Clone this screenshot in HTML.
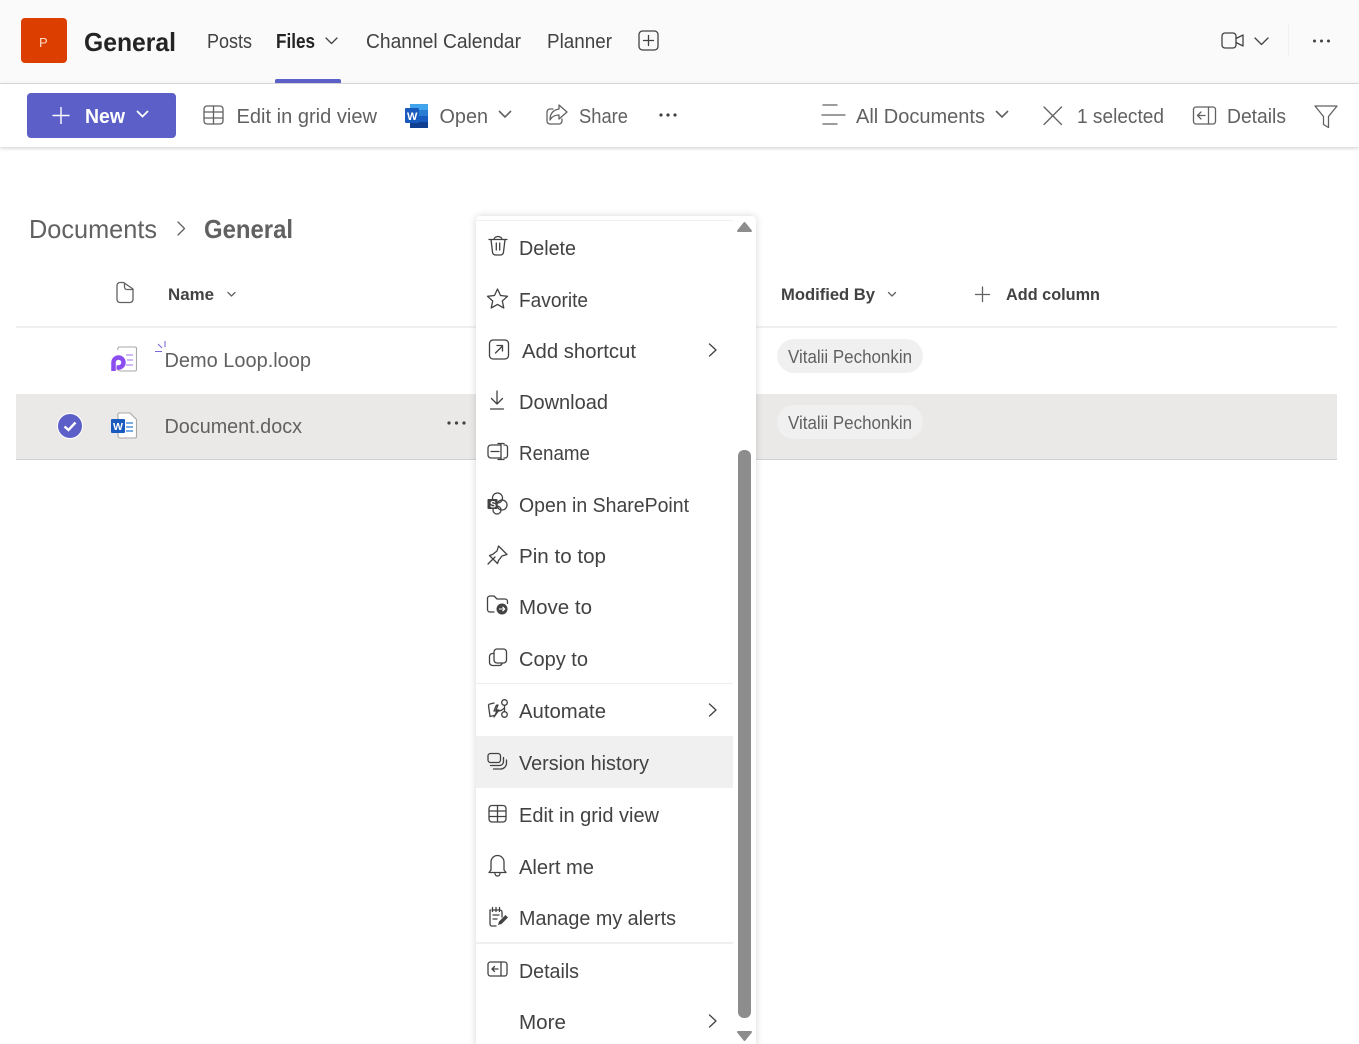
<!DOCTYPE html>
<html lang="en"><head><meta charset="utf-8"><title>General - Files</title>
<style>
html,body{margin:0;padding:0;width:1359px;height:1044px;overflow:hidden;background:#fff}
#root{position:relative;width:1359px;height:1044px;overflow:hidden;background:#fff}
.b{position:absolute}
svg{position:absolute;left:0;top:0}
text{font-family:"Liberation Sans",sans-serif;font-size:20px;fill:#424242}
.t{font-size:20px;fill:#616161}
.bd{font-weight:700}
.i{fill:none;stroke:#424242;stroke-width:1.3;stroke-linecap:round;stroke-linejoin:round}
.g{fill:none;stroke:#616161;stroke-width:1.3;stroke-linecap:round;stroke-linejoin:round}
</style></head><body>
<div id="root">
<div class="b" style="left:0;top:0;width:1359px;height:83px;background:#fafafa"></div>
<div class="b" style="left:0;top:83px;width:1359px;height:1px;background:#e0e0e0"></div>
<div class="b" style="left:0;top:84px;width:1359px;height:63px;background:#fff;box-shadow:0 1px 4px rgba(0,0,0,.2)"></div>
<div class="b" style="left:275px;top:79px;width:66px;height:4px;background:#5b5fc7;border-radius:2px 2px 0 0"></div>
<div class="b" style="left:21px;top:18px;width:46px;height:45px;background:#dc3e00;border-radius:4px"></div>
<div class="b" style="left:27px;top:93px;width:149px;height:45px;background:#5b5fc7;border-radius:4px"></div>
<div class="b" style="left:1288px;top:23px;width:1px;height:34px;background:#f0f0f0"></div>
<div class="b" style="left:16px;top:326px;width:1321px;height:2px;background:#f0f0f0"></div>
<div class="b" style="left:16px;top:394px;width:1321px;height:65px;background:#ebe9e7"></div>
<div class="b" style="left:16px;top:459px;width:1321px;height:1px;background:#d1d1d1"></div>
<div class="b" style="left:777px;top:339px;width:146px;height:34px;background:#f0f0f0;border-radius:17px"></div>
<div class="b" style="left:777px;top:405px;width:146px;height:34px;background:#f0f0f0;border-radius:17px"></div>
<div class="b" style="left:476px;top:216px;width:280px;height:840px;background:#fff;border-radius:4px;box-shadow:0 0 8px rgba(0,0,0,.16)"></div>
<div class="b" style="left:476px;top:220px;width:257px;height:1px;background:#f0f0f0"></div>
<div class="b" style="left:476px;top:683px;width:257px;height:1px;background:#ededed"></div>
<div class="b" style="left:476px;top:736px;width:257px;height:52px;background:#f0f0f0"></div>
<div class="b" style="left:476px;top:942px;width:257px;height:2px;background:#f0f0f0"></div>
<div class="b" style="left:738px;top:450px;width:13px;height:568px;background:#8d8d8d;border-radius:6px"></div>

<svg width="1359" height="1044" viewBox="0 0 1359 1044" xmlns="http://www.w3.org/2000/svg">
<!-- header -->
<text x="39" y="47" style="font-size:13px;fill:#ffd9c8">P</text>
<text x="84" y="51" class="bd" style="font-size:26px;fill:#242424" textLength="92" lengthAdjust="spacingAndGlyphs">General</text>
<text x="207" y="48" textLength="45" lengthAdjust="spacingAndGlyphs">Posts</text>
<text x="276" y="48" class="bd" style="fill:#242424" textLength="39" lengthAdjust="spacingAndGlyphs">Files</text>
<path class="i" d="M326 38l5.500 5.500 5.500-5.500"/>
<text x="366" y="48" textLength="155" lengthAdjust="spacingAndGlyphs">Channel Calendar</text>
<text x="547" y="48" textLength="65" lengthAdjust="spacingAndGlyphs">Planner</text>
<rect class="i" x="639" y="31" width="19" height="19" rx="3.500"/><path class="i" d="M648.500 35.500v10M643.500 40.500h10"/>
<rect class="i" x="1222" y="33" width="14" height="15" rx="3"/><path class="i" d="M1236 38.500l7-3.500v11l-7-3.500"/>
<path class="i" d="M1255 38l6.500 6.500 6.500-6.500"/>
<g fill="#424242"><circle cx="1314.500" cy="41" r="1.500"/><circle cx="1321.500" cy="41" r="1.500"/><circle cx="1328.500" cy="41" r="1.500"/></g>

<!-- toolbar -->
<path d="M61 107v17M52.500 115.500h17" fill="none" stroke="#fff" stroke-width="1.400"/>
<text x="85" y="123" class="bd" style="fill:#fff" textLength="40" lengthAdjust="spacingAndGlyphs">New</text>
<path d="M137 111l5.500 5.500 5.500-5.500" fill="none" stroke="#fff" stroke-width="1.800"/>
<rect class="g" x="204" y="106" width="19" height="18" rx="3"/><path class="g" d="M204 112h19M204 118h19M213.500 106v18"/>
<text x="236.500" y="123" class="t" textLength="140.500" lengthAdjust="spacingAndGlyphs">Edit in grid view</text>
<rect x="410" y="104" width="18" height="24" rx="1.500" fill="#2b7cd3"/><rect x="410" y="104" width="18" height="6" fill="#41a5ee"/><rect x="410" y="116" width="18" height="6" fill="#185abd"/><rect x="410" y="122" width="18" height="6" fill="#103f91"/>
<rect x="405" y="108" width="14" height="15" rx="1" fill="#185abd"/>
<text x="407" y="120" class="bd" style="font-size:11px;fill:#fff">W</text>
<text x="439.500" y="123" class="t" textLength="48.500" lengthAdjust="spacingAndGlyphs">Open</text>
<path d="M499 111l6 6 6-6" fill="none" stroke="#616161" stroke-width="1.600"/>
<path class="g" d="M553 109h-3a3 3 0 0 0-3 3v9a3 3 0 0 0 3 3h9a3 3 0 0 0 3-3v-2M559 105l8 7-8 7v-4c-4 0-7 1-9 5 0-6 3-10 9-11z"/>
<text x="579" y="123" class="t" textLength="49" lengthAdjust="spacingAndGlyphs">Share</text>
<g fill="#424242"><circle cx="661" cy="115" r="1.600"/><circle cx="668" cy="115" r="1.600"/><circle cx="675" cy="115" r="1.600"/></g>

<path class="g" d="M823 105h14M822 115h23M823 124h14"/>
<text x="856" y="123" class="t" textLength="129" lengthAdjust="spacingAndGlyphs">All Documents</text>
<path d="M996 111l6 6 6-6" fill="none" stroke="#616161" stroke-width="1.600"/>
<path class="g" d="M1044 107l17.500 17.500M1061.500 107l-17.500 17.500"/>
<text x="1077" y="123" class="t" textLength="87" lengthAdjust="spacingAndGlyphs">1 selected</text>
<rect class="g" x="1193.500" y="107" width="22" height="17" rx="2.500"/><path class="g" d="M1208.500 107v17M1205 115.500h-7M1201 112l-3.500 3.500 3.500 3.500"/>
<text x="1227" y="123" class="t" textLength="59" lengthAdjust="spacingAndGlyphs">Details</text>
<path class="g" d="M1315 106h22l-8.500 10.500v11l-5-3v-8z"/>

<!-- breadcrumb -->
<text x="29" y="238" style="font-size:26px;fill:#616161" textLength="128" lengthAdjust="spacingAndGlyphs">Documents</text>
<path class="g" d="M178 222l6.500 6.500-6.500 6.500"/>
<text x="204" y="238" class="bd" style="font-size:26px;fill:#616161" textLength="89" lengthAdjust="spacingAndGlyphs">General</text>

<!-- table head -->
<path class="g" d="M123.500 282.500h-3.500a3 3 0 0 0-3 3v14a3 3 0 0 0 3 3h10a3 3 0 0 0 3-3v-10.500zM124.500 283v4a2.500 2.500 0 0 0 2.500 2.500h5.500"/>
<text x="168" y="300" class="bd" style="font-size:17px" textLength="46" lengthAdjust="spacingAndGlyphs">Name</text>
<path class="g" d="M228 292.500l3.500 3.500 3.500-3.500"/>
<text x="781" y="300" class="bd" style="font-size:17px" textLength="94" lengthAdjust="spacingAndGlyphs">Modified By</text>
<path class="g" d="M888.500 292.500l3.500 3.500 3.500-3.500"/>
<path class="g" d="M982.500 287v14.500M975.500 294.500h14"/>
<text x="1006" y="300" class="bd" style="font-size:17px" textLength="94" lengthAdjust="spacingAndGlyphs">Add column</text>

<!-- row 1 -->
<path d="M118 350a2 2 0 0 1 2-3h15a1.500 1.500 0 0 1 1.500 1.500v21a1.500 1.500 0 0 1-1.500 1.500h-15a2 2 0 0 1-2-2" fill="#fff" stroke="#a8a8a8" stroke-width="1.100"/>
<path d="M126 355h7M127 360h6M126 365h7" stroke="#b090f0" stroke-width="1.300" fill="none"/>
<path d="M113.500 371v-8.500a5 5 0 1 1 5 5h-2" fill="none" stroke="#8b4cf0" stroke-width="4.500"/>
<path d="M155 351.500h7M158 344l4 4M165 341v6" stroke="#7a6bd9" stroke-width="1.100" fill="none"/>
<text x="164.500" y="367" class="t" textLength="146.500" lengthAdjust="spacingAndGlyphs">Demo Loop.loop</text>
<text x="788" y="363" class="t" style="font-size:18px" textLength="124" lengthAdjust="spacingAndGlyphs">Vitalii Pechonkin</text>

<!-- row 2 -->
<circle cx="70" cy="426" r="12.500" fill="#5b5fc7" stroke="#fff" stroke-width="1"/>
<path d="M64.500 426.500l4 3.500 7-7.500" fill="none" stroke="#fff" stroke-width="2.400"/>
<path d="M118 416a2 2 0 0 1 2-3h10l6.500 6.500v17a1.500 1.500 0 0 1-1.500 1.500h-15a2 2 0 0 1-2-2z" fill="#fff" stroke="#a8a8a8" stroke-width="1.100"/>
<path d="M126 423h7M126 427h7M126 431h7" stroke="#2b7cd3" stroke-width="1.200" fill="none"/>
<rect x="111" y="419" width="14" height="14" rx="1" fill="#185abd"/>
<text x="113" y="430" class="bd" style="font-size:10.500px;fill:#fff">W</text>
<text x="164.500" y="433" class="t" textLength="137.500" lengthAdjust="spacingAndGlyphs">Document.docx</text>
<g fill="#424242"><circle cx="449" cy="423" r="1.600"/><circle cx="456.500" cy="423" r="1.600"/><circle cx="464" cy="423" r="1.600"/></g>
<text x="788" y="429" class="t" style="font-size:18px" textLength="124" lengthAdjust="spacingAndGlyphs">Vitalii Pechonkin</text>

<!-- menu text -->
<text x="519" y="255" textLength="57" lengthAdjust="spacingAndGlyphs">Delete</text>
<text x="519" y="307" textLength="69" lengthAdjust="spacingAndGlyphs">Favorite</text>
<text x="522" y="358" textLength="114" lengthAdjust="spacingAndGlyphs">Add shortcut</text>
<text x="519" y="409" textLength="89" lengthAdjust="spacingAndGlyphs">Download</text>
<text x="519" y="460" textLength="71" lengthAdjust="spacingAndGlyphs">Rename</text>
<text x="519" y="512" textLength="170" lengthAdjust="spacingAndGlyphs">Open in SharePoint</text>
<text x="519" y="563" textLength="87" lengthAdjust="spacingAndGlyphs">Pin to top</text>
<text x="519" y="614" textLength="73" lengthAdjust="spacingAndGlyphs">Move to</text>
<text x="519" y="666" textLength="69" lengthAdjust="spacingAndGlyphs">Copy to</text>
<text x="519" y="718" textLength="87" lengthAdjust="spacingAndGlyphs">Automate</text>
<text x="519" y="770" textLength="130" lengthAdjust="spacingAndGlyphs">Version history</text>
<text x="519" y="822" textLength="140" lengthAdjust="spacingAndGlyphs">Edit in grid view</text>
<text x="519" y="874" textLength="75" lengthAdjust="spacingAndGlyphs">Alert me</text>
<text x="519" y="925" textLength="157" lengthAdjust="spacingAndGlyphs">Manage my alerts</text>
<text x="519" y="978" textLength="60" lengthAdjust="spacingAndGlyphs">Details</text>
<text x="519" y="1029" textLength="47" lengthAdjust="spacingAndGlyphs">More</text>

<!-- menu chevrons -->
<path class="i" d="M709.500 344l6.500 6-6.500 6M709.500 704l6.500 6-6.500 6M709.500 1015l6.500 6-6.500 6"/>

<!-- menu icons -->
<path class="i" d="M489 239.500h18M491 239.500l1.500 12.500a3 3 0 0 0 3 3h5a3 3 0 0 0 3-3l1.500-12.500M494 239.500a4 3 0 0 1 8 0M496.300 243v7M499.700 243v7"/>
<path class="i" d="M497.500 289l3 6.500 7 .8-5.200 4.700 1.500 7-6.300-3.600-6.300 3.600 1.500-7-5.200-4.700 7-.8z"/>
<rect class="i" x="489.500" y="340" width="19" height="19" rx="3.500"/><path class="i" d="M495.500 353l7-7M497 345.500h5.500v5.500"/>
<path class="i" d="M497 391v13M491.500 398.500l5.500 5.500 5.500-5.500M490.500 409h13"/>
<path class="i" d="M501 445h-10a3 3 0 0 0-3 3v7a3 3 0 0 0 3 3h10M504 445h1a2.500 2.500 0 0 1 2.500 2.500v8a2.500 2.500 0 0 1-2.500 2.500h-1M501 443.500v16M498 443.500h6M498 459.500h6M491 451.500h8"/>
<circle class="i" cx="497.500" cy="498" r="5"/><circle class="i" cx="502" cy="505" r="5"/><circle class="i" cx="497" cy="510" r="4"/>
<rect x="487.500" y="499" width="10" height="10" rx="1" fill="#424242"/><text x="490" y="507.500" class="bd" style="font-size:9px;fill:#fff">S</text>
<path class="i" d="M488 564l7-7M498.500 546l8.500 8.500-5 1.500-3.500 4.500-1 3-8-8 3-1 4.500-3.500z"/>
<path class="i" d="M494 612h-4a2.500 2.500 0 0 1-2.500-2.500v-11a2.500 2.500 0 0 1 2.500-2.500h4l3 3h8a2.500 2.500 0 0 1 2.500 2.500v2"/>
<circle cx="502" cy="609" r="5.500" fill="#424242"/><path d="M499 609h5.500M502.500 606.800l2.200 2.200-2.200 2.200" fill="none" stroke="#fff" stroke-width="1.100"/>
<rect class="i" x="494" y="649" width="12.500" height="14" rx="3"/><path class="i" d="M494 653.500h-1.500a3 3 0 0 0-3 3v6a3 3 0 0 0 3 3h7a3 3 0 0 0 2.500-2"/>
<path class="i" d="M494 703l-4 1a1.500 1.500 0 0 0-1.500 1.500l1.500 11 4-1M497 705l-1 1-2 5h3l-3 6 5-7h-3l2-5"/>
<circle class="i" cx="504.500" cy="702.500" r="2.800"/><circle class="i" cx="504.500" cy="714.500" r="2.800"/><path class="i" d="M504.500 705.500v6M498 711c3 0 4-1 6.500-3"/>
<rect class="i" x="488" y="753.500" width="12.500" height="9" rx="2.500"/><path class="i" d="M490.500 765.500h9a4 4 0 0 0 4-4v-4M493.500 769h7a6 6 0 0 0 6-6v-3"/>
<rect class="i" x="489" y="805.500" width="17" height="16.500" rx="3"/><path class="i" d="M489 811h17M489 816.500h17M497.500 805.500v16.500"/>
<path class="i" d="M491 870v-8a6.500 6.500 0 0 1 13 0v8l2 2.500h-17zM495 873.500a2.500 2.500 0 0 0 5 0"/>
<path class="i" d="M490.500 910h-.5v14a2 2 0 0 0 2 2h4M502 917v-5a2 2 0 0 0-2-2h-8M492.500 907.500v4M496 907.500v4M499.500 907.500v4M493 915h6M493 919h4"/>
<path d="M498 925l1-3.500 6.500-6.500 2.500 2.500-6.500 6.500z" fill="#424242"/>
<rect class="i" x="488" y="962" width="19" height="14" rx="2.500"/><path class="i" d="M501 962v14M498 969h-6M494.500 966.500l-2.500 2.500 2.500 2.500"/>

<!-- scroll arrows -->
<path d="M744.500 223l6.500 8h-13z" fill="#8d8d8d" stroke="#8d8d8d" stroke-width="2" stroke-linejoin="round"/>
<path d="M744.500 1040l6.500-8h-13z" fill="#8d8d8d" stroke="#8d8d8d" stroke-width="2" stroke-linejoin="round"/>
</svg>
</div>
</body></html>
